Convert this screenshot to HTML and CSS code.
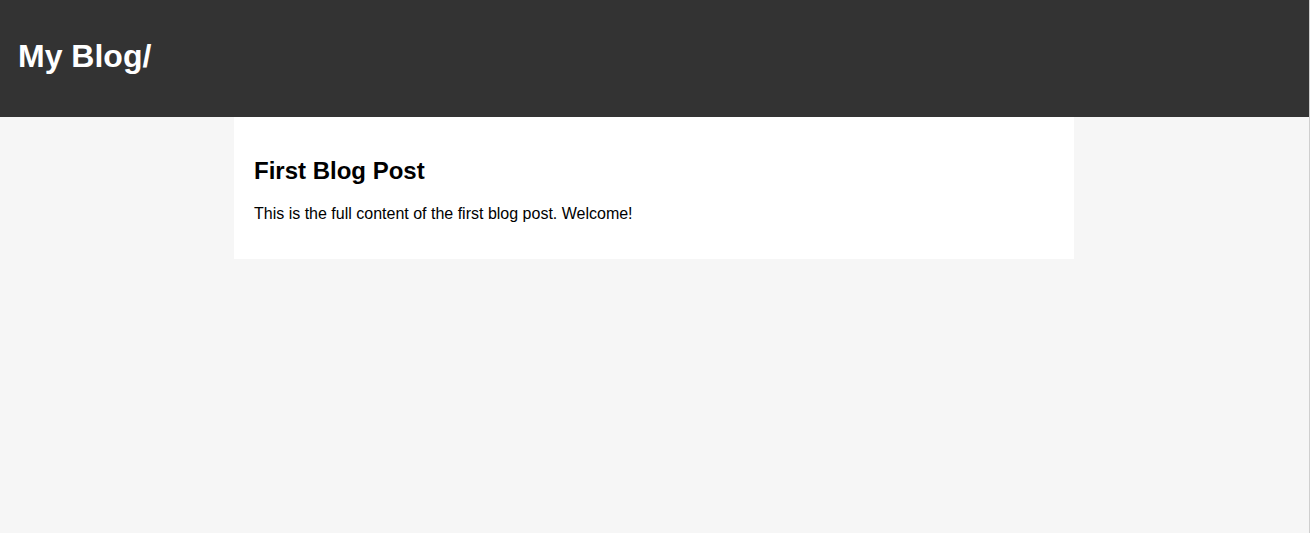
FILE: index.html
```html
<!DOCTYPE html>
<html lang="en">
<head>
<meta charset="utf-8">
<title>My Blog</title>
<link rel="stylesheet" href="styles.css">
</head>
<body>
<div class="page">
  <header class="site-header">
    <h1 class="site-title">My Blog/</h1>
  </header>
  <div class="main-area">
    <main class="content">
      <article class="post">
        <h2 class="post-title">First Blog Post</h2>
        <p class="post-body">This is the full content of the first blog post. Welcome!</p>
      </article>
    </main>
  </div>
</div>
</body>
</html>
```

FILE: styles.css
```css
html, body {
  margin: 0;
  padding: 0;
}
body {
  font-family: "Liberation Sans", Arial, sans-serif;
  background: #f6f6f6;
  color: #000;
}
.page {
  min-height: 100vh;
  border-right: 1px solid #cfcfcf;
  box-sizing: border-box;
}
.site-header {
  background: #333333;
  color: #fff;
  padding: 38px 18px 42px;
}
.site-title {
  margin: 0;
  font-size: 32px;
  line-height: 37px;
  font-weight: bold;
}
.main-area {
  padding-right: 1px;
}
.content {
  max-width: 800px;
  margin: 0 auto;
  background: #fff;
  padding: 20px;
}
.post-title {
  font-size: 24px;
  margin: 19.92px 0;
}
.post-body {
  font-size: 16px;
  margin: 16px 0;
}
```
